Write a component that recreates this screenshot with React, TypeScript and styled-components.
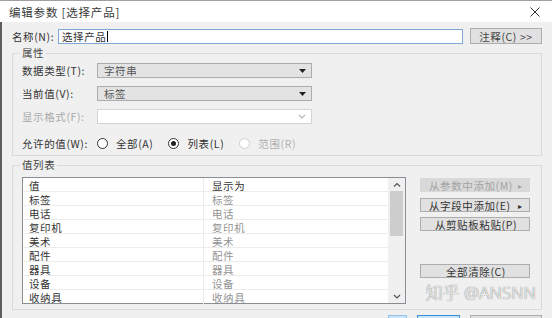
import styled, { createGlobalStyle } from 'styled-components';

const GlobalStyle = createGlobalStyle`
  html, body {
    margin: 0;
    padding: 0;
    background: #f0f0f0;
  }
  body {
    font-family: "Noto Sans CJK SC", "Microsoft YaHei", sans-serif;
    color: #333;
  }
`;

const rows = [
  ['标签', '标签'],
  ['电话', '电话'],
  ['复印机', '复印机'],
  ['美术', '美术'],
  ['配件', '配件'],
  ['器具', '器具'],
  ['设备', '设备'],
  ['收纳具', '收纳具'],
];

function Caret() {
  return (
    <svg width="7" height="4" viewBox="0 0 7 4">
      <path d="M0 0 H7 L3.5 4 Z" fill="#222" />
    </svg>
  );
}

function Chevron({ up, color = '#555' }: { up?: boolean; color?: string }) {
  return (
    <svg width="8" height="5" viewBox="0 0 8 5">
      <polyline
        points={up ? '1,4.5 4,1.5 7,4.5' : '1,1 4,4 7,1'}
        fill="none"
        stroke={color}
        strokeWidth="1.2"
      />
    </svg>
  );
}

function Radio({ checked, disabled }: { checked?: boolean; disabled?: boolean }) {
  return (
    <RadioCircle $disabled={disabled}>
      {checked && <RadioDot />}
    </RadioCircle>
  );
}

export default function App() {
  return (
    <>
      <GlobalStyle />
      <Window>
        <TitleBar>
          <Title>编辑参数 [选择产品]</Title>
          <svg width="10" height="10" viewBox="0 0 10 10">
            <path d="M0.5 0.5 L9.5 9.5 M9.5 0.5 L0.5 9.5" stroke="#333" strokeWidth="1" />
          </svg>
        </TitleBar>

        <Body>
          <NameRow>
            <NameLabel>名称(N):</NameLabel>
            <NameInput>
              选择产品<TextCaret />
            </NameInput>
            <Button $width={72} $height={16}>注释(C) &gt;&gt;</Button>
          </NameRow>

          <Group>
            <Legend>属性</Legend>
            <PropGrid>
              <Label>数据类型(T):</Label>
              <Select>
                字符串
                <Caret />
              </Select>
              <Label>当前值(V):</Label>
              <Select>
                标签
                <Caret />
              </Select>
              <Label $muted>显示格式(F):</Label>
              <Select $disabled>
                <span />
                <Chevron color="#b8b8b8" />
              </Select>
              <Label>允许的值(W):</Label>
              <RadioRow>
                <RadioOption>
                  <Radio />
                  全部(A)
                </RadioOption>
                <RadioOption>
                  <Radio checked />
                  列表(L)
                </RadioOption>
                <RadioOption $disabled>
                  <Radio disabled />
                  范围(R)
                </RadioOption>
              </RadioRow>
            </PropGrid>
          </Group>

          <Group $gap={3} $pad="6px 9px 5px 9px">
            <Legend>值列表</Legend>
            <ListArea>
              <ListBox>
                <Table>
                  <Row>
                    <Cell>值</Cell>
                    <Cell>显示为</Cell>
                  </Row>
                  {rows.map(([v, d], i) => (
                    <Row key={v} $last={i === rows.length - 1}>
                      <Cell>{v}</Cell>
                      <Cell $muted>{d}</Cell>
                    </Row>
                  ))}
                </Table>
                <ScrollBar>
                  <ScrollArrow>
                    <Chevron up />
                  </ScrollArrow>
                  <Track>
                    <Thumb />
                  </Track>
                  <ScrollArrow>
                    <Chevron />
                  </ScrollArrow>
                </ScrollBar>
              </ListBox>

              <ButtonColumn>
                <SideButton $disabled $top={1}>
                  从参数中添加(M)
                  <Arrow>▸</Arrow>
                </SideButton>
                <SideButton $top={6}>
                  从字段中添加(E)
                  <Arrow>▸</Arrow>
                </SideButton>
                <SideButton $top={5} $center>
                  从剪贴板粘贴(P)
                </SideButton>
                <SideButton $top={33} $center>
                  全部清除(C)
                </SideButton>
              </ButtonColumn>
            </ListArea>
            <Watermark>知乎 @ANSNN</Watermark>
          </Group>

          <Footer>
            <FooterButton $w={19} $tone="light" />
            <FooterButton $w={43} $tone="focus" />
            <FooterButton $w={73} $tone="plain" />
          </Footer>
        </Body>
      </Window>
    </>
  );
}

const Window = styled.div`
  width: 552px;
  height: 318px;
  overflow: hidden;
  background: #f0f0f0;
  font-size: 10.5px;
  letter-spacing: 0.6px;
`;

const TitleBar = styled.div`
  height: 22px;
  background: #ffffff;
  border-top: 1px solid #a0a0a0;
  box-sizing: border-box;
  display: flex;
  align-items: center;
  justify-content: space-between;
  padding: 0 12px 0 9px;
`;

const Title = styled.div`
  font-size: 11.5px;
  letter-spacing: 0.8px;
  color: #3a3a3a;
`;

const Body = styled.div`
  border-left: 2px solid #5e5e5e;
  padding: 6px 10px 0 10px;
  height: 296px;
  box-sizing: border-box;
`;

const NameRow = styled.div`
  display: flex;
  align-items: center;
  height: 16px;
`;

const NameLabel = styled.div`
  width: 46px;
`;

const NameInput = styled.div`
  flex: 1;
  height: 15px;
  box-sizing: border-box;
  border: 1px solid #7ea7d6;
  background: #fff;
  display: flex;
  align-items: center;
  padding-left: 3px;
  margin-right: 7px;
`;

const TextCaret = styled.span`
  width: 1px;
  height: 11px;
  background: #000;
  margin-left: 1px;
`;

const Button = styled.div<{ $width: number; $height: number }>`
  width: ${p => p.$width}px;
  height: ${p => p.$height}px;
  box-sizing: border-box;
  background: #e1e1e1;
  border: 1px solid #adadad;
  display: flex;
  align-items: center;
  justify-content: center;
  color: #444;
`;

const Group = styled.fieldset<{ $gap?: number; $pad?: string }>`
  margin: ${p => p.$gap ?? 3}px 0 0 0;
  padding: ${p => p.$pad ?? '4px 9px 1px 9px'};
  border: 1px solid #dadada;
  min-width: 0;
  position: relative;
`;

const Legend = styled.legend`
  padding: 0 2px;
  margin-left: -2px;
  line-height: 12px;
  height: 12px;
  color: #444;
`;

const PropGrid = styled.div`
  display: grid;
  grid-template-columns: 75px 215px;
  grid-template-rows: 15px 15px 15px 22px;
  row-gap: 8px;
  align-items: center;
`;

const Label = styled.div<{ $muted?: boolean }>`
  color: ${p => (p.$muted ? '#a8a8a8' : '#333')};
  white-space: nowrap;
`;

const Select = styled.div<{ $disabled?: boolean }>`
  height: 15px;
  box-sizing: border-box;
  border: 1px solid ${p => (p.$disabled ? '#d4d4d4' : '#acacac')};
  background: ${p => (p.$disabled ? '#ffffff' : '#e3e3e3')};
  display: flex;
  align-items: center;
  justify-content: space-between;
  padding: 0 5px 0 6px;
  color: #555;
`;

const RadioRow = styled.div`
  display: flex;
  align-items: center;
  gap: 15px;
  white-space: nowrap;
`;

const RadioOption = styled.div<{ $disabled?: boolean }>`
  display: flex;
  align-items: center;
  gap: 8px;
  color: ${p => (p.$disabled ? '#b0b0b0' : '#333')};
`;

const RadioCircle = styled.div<{ $disabled?: boolean }>`
  width: 11px;
  height: 11px;
  box-sizing: border-box;
  border-radius: 50%;
  border: 1px solid ${p => (p.$disabled ? '#cfcfcf' : '#333')};
  background: #fff;
  display: flex;
  align-items: center;
  justify-content: center;
`;

const RadioDot = styled.div`
  width: 5px;
  height: 5px;
  border-radius: 50%;
  background: #222;
`;

const ListArea = styled.div`
  display: flex;
  gap: 14px;
`;

const ListBox = styled.div`
  width: 384px;
  height: 127px;
  box-sizing: border-box;
  border: 1px solid #8a8d94;
  background: #fff;
  display: flex;
`;

const Table = styled.div`
  flex: 1;
`;

const Row = styled.div<{ $last?: boolean }>`
  display: grid;
  grid-template-columns: 181px 1fr;
  height: 14px;
  box-sizing: border-box;
  border-bottom: ${p => (p.$last ? 'none' : '1px solid #ececec')};
`;

const Cell = styled.div<{ $muted?: boolean }>`
  display: flex;
  align-items: center;
  padding-left: 6px;
  color: ${p => (p.$muted ? '#939393' : '#333')};
  &:first-child {
    border-right: 1px solid #ececec;
  }
  &:last-child {
    padding-left: 8px;
  }
`;

const ScrollBar = styled.div`
  width: 17px;
  background: #f0f0f0;
  display: flex;
  flex-direction: column;
`;

const ScrollArrow = styled.div`
  height: 13px;
  display: flex;
  align-items: center;
  justify-content: center;
`;

const Track = styled.div`
  flex: 1;
  display: flex;
  justify-content: center;
`;

const Thumb = styled.div`
  width: 13px;
  height: 45px;
  background: #cdcdcd;
`;

const ButtonColumn = styled.div`
  width: 110px;
  display: flex;
  flex-direction: column;
`;

const SideButton = styled.div<{ $top: number; $disabled?: boolean; $center?: boolean }>`
  margin-top: ${p => p.$top}px;
  height: 14px;
  box-sizing: border-box;
  background: ${p => (p.$disabled ? '#d9d9d9' : '#e1e1e1')};
  border: 1px solid ${p => (p.$disabled ? '#d9d9d9' : '#adadad')};
  color: ${p => (p.$disabled ? '#a3a3a3' : '#333')};
  display: flex;
  align-items: center;
  justify-content: ${p => (p.$center ? 'center' : 'space-between')};
  padding: 0 6px 0 8px;
  white-space: nowrap;
`;

const Arrow = styled.span`
  font-size: 8px;
`;

const Watermark = styled.div`
  position: absolute;
  right: 5px;
  bottom: 5px;
  font-family: "Noto Sans", "Noto Sans CJK SC", sans-serif;
  font-size: 17px;
  font-weight: 300;
  letter-spacing: 0;
  color: rgba(255, 255, 255, 0.92);
  text-shadow: 0 0 1px rgba(0, 0, 0, 0.5), 0 0 1px rgba(0, 0, 0, 0.3);
`;

const Footer = styled.div`
  display: flex;
  margin-top: 5px;
  padding-left: 376px;
  gap: 10px;
`;

const FooterButton = styled.div<{ $w: number; $tone: 'light' | 'focus' | 'plain' }>`
  width: ${p => p.$w}px;
  height: 20px;
  box-sizing: border-box;
  background: ${p => (p.$tone === 'plain' ? '#e1e1e1' : '#cce4f7')};
  border: 1px solid ${p => (p.$tone === 'focus' ? '#3c8cd6' : p.$tone === 'light' ? '#8fc3ea' : '#adadad')};
`;
